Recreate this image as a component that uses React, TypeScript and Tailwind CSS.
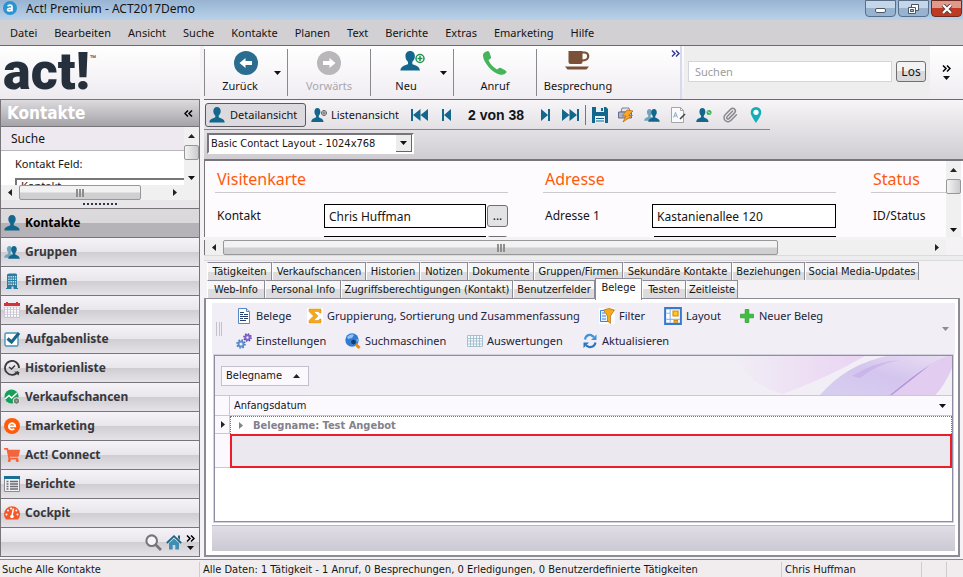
import type { ReactNode } from 'react'
import { Paperclip } from 'lucide-react'
import { FaShoppingCart } from 'react-icons/fa'

const TEAL = '#13678c'

const BUST =
  'M8 0C5.6 0 4.3 1.8 4.3 4.1c0 1.9.9 3.6 2 4.5v1.7c-1 1.1-5.7 1-6 5.2h15.4c-.3-4.2-5-4.1-6-5.2V8.6c1.1-.9 2-2.6 2-4.5C11.7 1.8 10.4 0 8 0z'

function Svg({ size = 16, children }: { size?: number; children: ReactNode }) {
  return (
    <svg width={size} height={size} viewBox="0 0 16 16" className="shrink-0" aria-hidden="true">
      {children}
    </svg>
  )
}

const Bust = () => (
  <Svg>
    <path d={BUST} fill={TEAL} />
  </Svg>
)

const Group = () => (
  <Svg>
    <path d={BUST} fill="#6fa5bf" transform="translate(0 2) scale(.68 .75)" />
    <path d={BUST} fill={TEAL} transform="translate(4 2) scale(.75 .82)" />
  </Svg>
)

const Building = () => (
  <Svg>
    <path d="M3 1.5 5 .5h7l1 1V15h1v1H9.5v-2.5h-2V16H2v-1h1z" fill="#2b7ba0" />
    <g fill="#d5e6ee">
      {[3, 5.5, 8, 10.5].map((y) =>
        [4.3, 6.5, 8.7, 10.9].map((x) => <rect key={`${x}-${y}`} x={x} y={y} width="1.3" height="1.5" />)
      )}
    </g>
  </Svg>
)

const CalendarIcon = () => (
  <Svg>
    <path d="M0 5h16v11H0z" fill="#cbc6d3" />
    <path d="M0 1h2V0h2v1h8V0h2v1h2v3H0z" fill="#d0343c" />
    <g fill="#fff">
      {[5.5, 8, 10.5, 13].map((y) =>
        [1, 4, 7, 10, 13].map((x) => <rect key={`${x}-${y}`} x={x} y={y} width="2" height="1.7" />)
      )}
    </g>
  </Svg>
)

const Check = () => (
  <Svg>
    <rect x="1" y="2" width="13" height="13" rx="1.5" fill="#fff" stroke="#4a93b4" strokeWidth="1.4" />
    <path d="m3.5 7.5 4 3.5L15 2" fill="none" stroke="#1b6588" strokeWidth="3" />
  </Svg>
)

const History = () => (
  <Svg>
    <path d="M14 11.5A7 7 0 1 1 15 8" fill="none" stroke="#3a3a3a" strokeWidth="1.8" />
    <path d="m10 11.5 5.5.5-1 3.500z" fill="#3a3a3a" />
    <path d="m5 7 2.5 2L11 5.5" fill="none" stroke="#3a3a3a" strokeWidth="1.5" />
  </Svg>
)

const Chances = () => (
  <Svg>
    <circle cx="7.5" cy="7.5" r="7" fill="#17a05a" />
    <path d="M1 10 5 6.5 7.5 9 13 4" fill="none" stroke="#fff" strokeWidth="1.5" />
    <circle cx="12.5" cy="12" r="3.3" fill="#777" stroke="#eee" />
    <circle cx="12.5" cy="12" r="1" fill="#aaa" />
  </Svg>
)

const Emark = () => (
  <Svg>
    <circle cx="8" cy="8" r="8" fill="#ff5a0a" />
    <path d="M4.5 8.300h6.700A3.2 3.2 0 1 0 10.3 10.7" fill="none" stroke="#fff" strokeWidth="1.8" />
  </Svg>
)

const Report = () => (
  <Svg>
    <path d="M.5.5h15v15H.5z" fill="#f2f2f4" stroke="#8b8b96" />
    <path d="M0 0h16v3H0z" fill="#1b6f96" />
    <path d="M2.5 5.5h2m-2 2.500h2m-2 2.500h2m-2 2.500h2M6 5.5h8M6 8h8m-8 2.500h8M6 13h8" stroke="#6b6b78" strokeWidth="1.3" />
  </Svg>
)

const Cockpit = () => (
  <Svg>
    <path d="M2 14.5A8 8 0 1 1 14 14.5z" fill="#f4572a" />
    <path d="m9.5 3.5-1.5 7" stroke="#fff" strokeWidth="1.5" />
    <circle cx="8" cy="11.5" r="1.8" fill="#fff" />
    {[[2.5, 9.5], [4, 5.5], [7, 3.5], [12.3, 5.5], [13.5, 9.5]].map(([x, y]) => (
      <circle key={x} cx={x} cy={y} r="1" fill="#fff" />
    ))}
  </Svg>
)

const Magnifier = () => (
  <Svg size={17}>
    <circle cx="6.3" cy="6.3" r="5" fill="#f5f4f6" stroke="#76747a" strokeWidth="1.9" />
    <path d="m10 10 5 5" stroke="#76747a" strokeWidth="2.6" />
  </Svg>
)

const Home = () => (
  <Svg>
    <path d="M3 9v6.500h3.700V11h2.600v4.500H13V9L8 4.5z" fill="#3f8fb2" />
    <path d="M.8 9 8 2.2 15.2 9" fill="none" stroke="#1b6588" strokeWidth="1.8" />
    <path d="M12 1.500h2V6l-2-2z" fill="#1b6588" />
  </Svg>
)

const Circle = ({ left, color }: { left?: boolean; color: string }) => (
  <svg width="24" height="24" viewBox="0 0 24 24" aria-hidden="true">
    <circle cx="12" cy="12" r="12" fill={color} />
    <path
      d="M5.5 12 11.5 7v3H18v4h-6.500v3z"
      fill="#fff"
      transform={left ? undefined : 'matrix(-1 0 0 1 24 0)'}
    />
  </svg>
)

const NewContact = () => (
  <svg width="25" height="20" viewBox="0 0 25 20" aria-hidden="true">
    <path d={BUST} fill={TEAL} transform="scale(1.27 1.25)" />
    <circle cx="20" cy="7.5" r="4" fill="#fff" stroke="#239150" strokeWidth="1.5" />
    <path d="M20 5v5m-2.5-2.5h5" stroke="#239150" strokeWidth="1.5" />
  </svg>
)

const Phone = () => (
  <svg width="24" height="24" viewBox="0 0 24 24" aria-hidden="true">
    <path
      d="M0 3.500Q1 .5 5 0q1 0 1.500 1.500L8 6q.3 1.200-.7 1.700L5.500 9q2 5.500 8.500 9.500l2-1.500q1-.7 2 0l4.500 2.500q1.500 1 .7 2.200Q21 24.500 16.500 23.500 11 22 6 16.500-.5 9 0 3.500z"
      fill="#45b55a"
    />
  </svg>
)

const Cup = () => (
  <svg width="26" height="19" viewBox="0 0 26 19" aria-hidden="true">
    <path d="M3.500 0h14v11q0 2-2 2h-10q-2 0-2-2z" fill="#7a5138" />
    <path d="M17 1.500h3q4 1 3 5-1 3-6 3" fill="none" stroke="#7a5138" strokeWidth="2.2" />
    <path d="M0 15.500h24l-2.500 3h-19z" fill="#7a5138" />
  </svg>
)

const Down = ({ color = '#111' }: { color?: string }) => (
  <svg width="7" height="4" viewBox="0 0 7 4" className="shrink-0" aria-hidden="true">
    <path d="M0 0h7L3.5 4z" fill={color} />
  </svg>
)
const Up = () => (
  <svg width="7" height="4" viewBox="0 0 7 4" className="shrink-0" aria-hidden="true">
    <path d="M0 4h7L3.5 0z" fill="#222" />
  </svg>
)
const Right = ({ color = '#222' }: { color?: string }) => (
  <svg width="4" height="7" viewBox="0 0 4 7" className="shrink-0" aria-hidden="true">
    <path d="M0 0v7l4-3.5z" fill={color} />
  </svg>
)
const Left = () => (
  <svg width="4" height="7" viewBox="0 0 4 7" className="shrink-0" aria-hidden="true">
    <path d="M4 0v7L0 3.5z" fill="#222" />
  </svg>
)

const Chevrons = ({ flip, color = '#000' }: { flip?: boolean; color?: string }) => (
  <svg width="9" height="7" viewBox="0 0 9 7" className={flip ? 'rotate-180' : ''} aria-hidden="true">
    <path d="m1 .5 3 3-3 3m4-6 3 3-3 3" fill="none" stroke={color} strokeWidth="1.5" />
  </svg>
)

const More = () => (
  <button aria-label="Mehr" className="flex flex-col items-center gap-1">
    <Chevrons />
    <Down />
  </button>
)

function HScroll({ thumb }: { thumb: string }) {
  return (
    <div className="flex h-[15px] items-center bg-[#f0f0f0]">
      <span className="flex w-[18px] justify-center">
        <Left />
      </span>
      <div className="flex h-full flex-1">
        <div
          className={`flex items-center justify-center gap-px rounded-xs border border-[#979797] bg-linear-to-b from-[#f2f2f2] from-45% to-[#cfcfd2] to-55% ${thumb}`}
        >
          <i className="h-2 w-0.5 bg-[#8e8e8e]" />
          <i className="h-2 w-0.5 bg-[#8e8e8e]" />
          <i className="h-2 w-0.5 bg-[#8e8e8e]" />
        </div>
      </div>
      <span className="flex w-[18px] justify-center">
        <Right />
      </span>
    </div>
  )
}

function VScroll() {
  return (
    <div className="flex w-[15px] shrink-0 flex-col items-center bg-[#f0f0f0]">
      <span className="flex h-[18px] items-center">
        <Up />
      </span>
      <div className="h-[15px] w-full rounded-xs border border-[#979797] bg-linear-to-r from-[#f4f4f4] to-[#cbcbd0]" />
      <span className="mt-auto flex h-[15px] items-center">
        <Down />
      </span>
    </div>
  )
}

const menu = ['Datei', 'Bearbeiten', 'Ansicht', 'Suche', 'Kontakte', 'Planen', 'Text', 'Berichte', 'Extras', 'Emarketing', 'Hilfe']

function TitleBar() {
  return (
    <header>
      <div className="flex h-5 items-start bg-linear-to-b from-[#98b4d2] to-[#b9d2ea] pl-[3px]">
        <svg width="14" height="14" viewBox="0 0 14 14" className="mt-px" aria-hidden="true">
          <circle cx="7" cy="7" r="7" fill="#2b93cd" />
          <path d="M4.5 5Q9 3 9 6v4.500M9 7Q4.5 7 4.5 8.700 5 11 9 8.800" fill="none" stroke="#fff" strokeWidth="1.7" />
        </svg>
        <h1 className="ml-[9px] flex-1 text-[12px] leading-[18px]">Act! Premium - ACT2017Demo</h1>
        <div className="flex gap-0.5 pr-px">
          <button aria-label="Minimieren" className="flex h-[17px] w-[31px] items-center justify-center rounded-b-sm border border-[#5a6f87] bg-linear-to-b from-[#c5d6e8] from-50% to-[#98b3cf] to-50%">
            <i className="mt-1 h-[5px] w-[11px] rounded-xs border border-[#4c5766] bg-white" />
          </button>
          <button aria-label="Verkleinern" className="flex h-[17px] w-[31px] items-center justify-center rounded-b-sm border border-[#5a6f87] bg-linear-to-b from-[#c5d6e8] from-50% to-[#98b3cf] to-50%">
            <svg width="13" height="12" viewBox="0 0 13 12" aria-hidden="true">
              <path d="M4.500 1.500h7v6h-7z" fill="#fff" stroke="#4c5766" />
              <path d="M1.500 4.500h7v6h-7z" fill="#fff" stroke="#4c5766" />
              <path d="M3.500 6.500h3v2h-3z" fill="#9fb7d0" stroke="#4c5766" />
            </svg>
          </button>
          <button aria-label="Schließen" className="flex h-[17px] w-[31px] items-center justify-center rounded-b-sm border border-[#6b2a22] bg-linear-to-b from-[#e09a8c] from-50% to-[#bf3a22] to-50%">
            <svg width="12" height="10" viewBox="0 0 12 10" aria-hidden="true">
              <path d="m2 1 8 8m0-8L2 9" stroke="#5a3a3f" strokeWidth="4" />
              <path d="m2 1 8 8m0-8L2 9" stroke="#fff" strokeWidth="2.2" />
            </svg>
          </button>
        </div>
      </div>
      <nav className="flex h-[26px] items-center gap-[17px] border-b border-[#6b6b6b] bg-[#d2d0d2] pl-2.5">
        {menu.map((m) => (
          <button key={m}>{m}</button>
        ))}
      </nav>
    </header>
  )
}

const areas = [
  { label: 'Kontakte', icon: <Bust /> },
  { label: 'Gruppen', icon: <Group /> },
  { label: 'Firmen', icon: <Building /> },
  { label: 'Kalender', icon: <CalendarIcon /> },
  { label: 'Aufgabenliste', icon: <Check /> },
  { label: 'Historienliste', icon: <History /> },
  { label: 'Verkaufschancen', icon: <Chances /> },
  { label: 'Emarketing', icon: <Emark /> },
  { label: 'Act! Connect', icon: <FaShoppingCart size={16} color="#f4633a" /> },
  { label: 'Berichte', icon: <Report /> },
  { label: 'Cockpit', icon: <Cockpit /> },
]

function Sidebar() {
  return (
    <aside className="flex w-[200px] shrink-0 flex-col">
      <div className="flex h-[53px] items-start bg-linear-to-b from-white to-[#eeebf0] pl-[3px] text-[#25303c]">
        <span className="font-[Roboto] text-[52px] leading-[52px] font-black">act!</span>
        <span className="mt-2 text-[8px] leading-[8px] font-bold">™</span>
      </div>
      <div className="flex min-h-0 flex-1 flex-col border-x border-[#77757a]">
        <div className="flex h-7 items-center justify-between border-y border-[#77757a] bg-linear-to-b from-[#dddbde] to-[#a5a3a8] pr-1.5 pl-1.5">
          <h2 className="font-['DejaVu_Sans_Condensed'] text-[17px] font-bold text-white">Kontakte</h2>
          <button aria-label="Einklappen">
            <Chevrons flip />
          </button>
        </div>
        <div className="flex h-[58px]">
          <div className="flex-1 overflow-hidden bg-white">
            <div className="h-6 border-b border-[#b9b7bc] bg-[#eee9f0] pl-2.5 text-[12px] leading-[23px]">Suche</div>
            <label htmlFor="feld" className="block pt-1 pl-3.5 leading-[17px]">
              Kontakt Feld:
            </label>
            <select id="feld" className="mt-1.5 ml-3.5 block w-[200px] appearance-none border-2 border-[#777] pl-1 leading-3">
              <option>Kontakt</option>
            </select>
          </div>
          <VScroll />
        </div>
        <div className="bg-[#f0f0f0] pr-[15px]">
          <HScroll thumb="w-[122px]" />
        </div>
        <div className="flex h-2 items-center justify-center gap-0.5 bg-[#e9e6ea]">
          {Array.from({ length: 9 }, (_, i) => (
            <i key={i} className="size-0.5 bg-[#2c3550]" />
          ))}
        </div>
        <nav className="text-[12px] font-bold text-[#37373c]">
          {areas.map(({ label, icon }, i) => (
            <button
              key={label}
              className={
                i === 0
                  ? 'flex h-[29px] w-full items-center gap-[5px] border-t border-[#77757a] bg-linear-to-b from-[#dbd9dc] from-50% to-[#b5b3b8] to-50% pl-[3px] text-black'
                  : 'flex h-[29px] w-full items-center gap-[5px] border-t border-[#77757a] bg-[linear-gradient(#f6f3f8,#e9e6eb_50%,#cfcdd1_50%,#e6e3e8)] pl-[3px]'
              }
            >
              {icon}
              {label}
            </button>
          ))}
        </nav>
        <div className="flex flex-1 items-center justify-end gap-1 border-y border-[#77757a] bg-[linear-gradient(#f6f3f8,#e9e6eb_50%,#cfcdd1_50%,#e6e3e8)] pr-1">
          <button aria-label="Suchen">
            <Magnifier />
          </button>
          <button aria-label="Start">
            <Home />
          </button>
          <More />
        </div>
      </div>
    </aside>
  )
}

function Tool({ icon, label, arrow, off }: { icon: ReactNode; label: string; arrow?: boolean; off?: boolean }) {
  return (
    <div className="relative my-[3px] w-[83px] border-l border-[#8b898e]">
      <button disabled={off} className={off ? 'flex w-full flex-col items-center text-[#a9a7ac]' : 'flex w-full flex-col items-center'}>
        <span className="flex h-[30px] items-start pt-0.5">{icon}</span>
        <span className={arrow ? 'pr-3 leading-[14px]' : 'leading-[14px]'}>{label}</span>
      </button>
      {arrow && (
        <span className="absolute top-[22px] right-1.5">
          <Down />
        </span>
      )}
    </div>
  )
}

function Toolbar() {
  return (
    <div className="flex h-[53px] bg-linear-to-b from-white to-[#f0edf2]">
      <Tool icon={<Circle left color="#2a6d90" />} label="Zurück" arrow />
      <Tool icon={<Circle color="#b9b7ba" />} label="Vorwärts" off />
      <Tool icon={<NewContact />} label="Neu" arrow />
      <Tool icon={<Phone />} label="Anruf" />
      <Tool icon={<Cup />} label="Besprechung" />
      <div className="flex flex-1 items-start justify-end border-r-2 border-[#d5daf0] pt-1">
        <Chevrons color="#3b3b99" />
      </div>
      <form className="ml-0.5 flex h-[51px] items-center gap-1 bg-[#efeeef] px-1" onSubmit={(e) => e.preventDefault()}>
        <input
          aria-label="Suchen"
          placeholder="Suchen"
          className="h-[21px] w-[204px] border border-[#cfd6e2] bg-white px-1.5 placeholder:text-[#9c9c9c]"
        />
        <button className="h-[21px] w-[30px] rounded-[3px] border border-[#707070] bg-linear-to-b from-[#f3f3f3] from-50% to-[#d9d9dc] to-50% text-[12px] leading-4">
          Los
        </button>
      </form>
      <div className="flex w-[33px] justify-center self-center pr-px">
        <More />
      </div>
    </div>
  )
}

const Step = ({ back, end }: { back?: boolean; end?: boolean }) => (
  <button aria-label={back ? 'Zurück blättern' : 'Weiter blättern'}>
    <svg width={end ? 17 : 9} height="12" viewBox={end ? '0 0 17 12' : '0 0 9 12'} className={back ? 'rotate-180' : ''} aria-hidden="true">
      <path d={end ? 'M0 0v12l7.5-6zM7.5 0v12l7.5-6zM15 0h2v12h-2z' : 'M0 0v12l7-6zM7 0h2v12H7z'} fill={TEAL} />
    </svg>
  </button>
)

function ViewBar() {
  return (
    <div className="flex h-[30px] w-[566px] items-center border-b border-[#87858a] pl-px">
      <button className="flex h-6 w-[101px] items-center gap-[5px] rounded-[3px] border border-[#5c5a60] bg-[#dcdadf] pl-[3px]">
        <Bust />
        Detailansicht
      </button>
      <button className="ml-[5px] flex items-center gap-1">
        <Svg>
          <path d={BUST} fill={TEAL} transform="translate(0 1) scale(.8 .9)" />
          <circle cx="13" cy="6" r="2.5" fill="#fff" stroke="#666" />
          <path d="M13 3v6m-3-3h6" stroke="#666" />
        </Svg>
        Listenansicht
      </button>
      <div className="ml-3 flex flex-1 items-center">
        <Step back end />
        <span className="ml-3.5 flex">
          <Step back />
        </span>
        <span className="flex-1 text-center text-[14px] leading-5 font-bold font-['Liberation_Sans']">2 von 38</span>
        <span className="mr-3 flex">
          <Step />
        </span>
        <Step end />
      </div>
      <div className="ml-1.5 flex items-center gap-2.5 border-l border-[#77757a] py-0.5 pr-1.5 pl-1.5">
        <button aria-label="Speichern">
          <Svg>
            <path d="M0 0h14l2 2v14H0z" fill={TEAL} />
            <path d="M4 0h8v5H4zM3 9h10v7H3z" fill="#e9eef2" />
            <path d="M9 1h2v3H9zM4 11h8v1H4zm0 2.500h8v1H4z" fill={TEAL} />
          </Svg>
        </button>
        <button aria-label="Drucken">
          <Svg>
            <path d="M4 1h7l1 4H3z" fill="#dfe6f5" stroke="#667" strokeWidth=".8" />
            <path d="M.5 5h13v6H.5z" fill="#a9b4cf" stroke="#4c5577" strokeWidth=".8" />
            <path d="m9 3-5 6h4l-3 6 9.500-6.500H10.500L15 4z" fill="#f9a825" stroke="#c56a0c" strokeWidth=".8" />
          </Svg>
        </button>
        <button aria-label="Gruppe">
          <Group />
        </button>
        <button aria-label="Brief">
          <Svg>
            <path d="M1.500.5h9l3 3v12h-12z" fill="#fafafa" stroke="#a5a5aa" />
            <path d="M10.500.5v3h3" fill="none" stroke="#a5a5aa" />
            <path d="m3.500 10.500 2-5 2 5m-3.300-1.500h2.600" fill="none" stroke="#7ba3c6" strokeWidth=".9" />
            <path d="m10 12 5-5" stroke="#444" strokeWidth="1.6" />
          </Svg>
        </button>
        <button aria-label="Kontakt anrufen">
          <Svg>
            <path d={BUST} fill={TEAL} transform="translate(0 1) scale(.8 .9)" />
            <circle cx="13" cy="5.5" r="2.5" fill="#3cae52" />
            <path d="m12 4.500 2 2" stroke="#fff" />
          </Svg>
        </button>
        <button aria-label="Anhang">
          <Paperclip size={16} color="#8a888d" strokeWidth={2.2} />
        </button>
        <button aria-label="Karte">
          <Svg>
            <path d="M8 0a5.300 5.300 0 0 0-5.300 5.500C2.700 9 8 16 8 16s5.300-7 5.300-10.500A5.300 5.300 0 0 0 8 0z" fill="#16adb8" />
            <circle cx="8" cy="5.3" r="2.6" fill="#fff" />
          </Svg>
        </button>
      </div>
    </div>
  )
}

type SectionProps = { title: string; label: string; value?: string; labelWidth?: string; width?: string; lookup?: boolean }

function Section({ title, label, value, labelWidth, width, lookup }: SectionProps) {
  return (
    <section className="w-[293px] shrink-0">
      <h3 className="h-[32px] border-b border-[#cdcacf] pl-0.5 text-[16px] leading-[36px] text-[#ff5a0a]">{title}</h3>
      <div className="mt-[11px] flex h-6 items-center pl-0.5 text-[12px]">
        <label htmlFor={label} className={labelWidth}>
          {label}
        </label>
        {value && <input id={label} defaultValue={value} className={`h-6 border border-black bg-white px-1 ${width}`} />}
        {lookup && (
          <button className="ml-px h-[22px] w-[21px] rounded-[3px] border border-[#707070] bg-[#e3e3e6] leading-[14px]">...</button>
        )}
      </div>
      {value && (
        <div className="mt-2 flex pl-0.5">
          <span className={labelWidth} />
          <input aria-label={`${label} Zusatz`} className={`h-6 border border-black bg-white ${width}`} />
          {lookup && <span className="ml-px h-[22px] w-[21px] rounded-[3px] border border-[#707070]" />}
        </div>
      )}
    </section>
  )
}

const tabRows = [
  [
    ['Tätigkeiten', 'w-[65px]'],
    ['Verkaufschancen', 'w-[94px]'],
    ['Historien', 'w-[54px]'],
    ['Notizen', 'w-[48px]'],
    ['Dokumente', 'w-[66px]'],
    ['Gruppen/Firmen', 'w-[89px]'],
    ['Sekundäre Kontakte', 'w-[109px]'],
    ['Beziehungen', 'w-[73px]'],
    ['Social Media-Updates', 'w-[114px]'],
  ],
  [
    ['Web-Info', 'w-[58px]'],
    ['Personal Info', 'w-[76px]'],
    ['Zugriffsberechtigungen (Kontakt)', 'w-[172px]'],
    ['Benutzerfelder', 'w-[82px]'],
    ['Belege', 'w-[47px]'],
    ['Testen', 'w-[44px]'],
    ['Zeitleiste', 'w-[52px]'],
  ],
]

function Tabs() {
  return (
    <div className="pl-[3px] font-['DejaVu_Sans_Condensed'] text-[11px]">
      {tabRows.map((row) => (
        <div key={row[0][0]} className="flex h-[18px]">
          {row.map(([t, w]) => (
            <button
              key={t}
              className={
                t === 'Belege'
                  ? `z-10 -mt-0.5 h-[22px] border border-b-0 border-[#8d8b96] bg-white pb-1 leading-4 whitespace-nowrap ${w}`
                  : `border border-b-0 border-[#8d8b96] border-l-white bg-linear-to-b from-[#f6f6f6] from-50% to-[#dcdcde] to-50% leading-4 whitespace-nowrap ${w}`
              }
            >
              {t}
            </button>
          ))}
        </div>
      ))}
    </div>
  )
}

const Sheet = () => (
  <Svg>
    <path d="M2.500.5h8l3 3v12h-11z" fill="#fff" stroke="#5589c4" />
    <path d="M10.500.5v3h3" fill="#cfe2f6" stroke="#5589c4" />
    <path d="M4 4.500h4m-4 2h3m1 0h4m-8 2h8m-8 2h3m1 0h4m-8 2h6" stroke="#27406b" />
  </Svg>
)
const Sigma = () => (
  <Svg>
    <path d="M0 0h16v16H0z" fill="#fff" />
    <path d="M2 1h12v4h-1.500l-.5-1.500H6.500L11 8l-4.500 4.500H12l.5-1.500H14v4H2v-2.500L6.500 8 2 3.500z" fill="#f6a81b" stroke="#d98b0c" strokeWidth=".5" />
  </Svg>
)
const Filter = () => (
  <Svg>
    <path d="M0 0h16v16H0z" fill="#fff" />
    <path d="M1.500 2.500h9v11h-9z" fill="#eaf3fd" stroke="#3c82d8" />
    <path d="M3 5h3M3 8h4m-4 3h4" stroke="#3c82d8" />
    <path d="M4.500 2 8.500 8v5l3 2.500V8L15.500 2Q10-1 4.500 2z" fill="#f5a91c" stroke="#b56c0a" strokeWidth=".7" />
  </Svg>
)
const LayoutIcon = () => (
  <Svg size={18}>
    <path d="M1 1h14v14H1z" fill="#fff" stroke="#3a78cf" strokeWidth="1.8" />
    <path d="M5.500 2v12M2 5.500h3.500M2 11h12" stroke="#8fb9ee" />
    <path d="M8 3.500h4.500v4.500H8zM9 12h3v1.500H9z" fill="#ffc629" stroke="#d08b06" />
  </Svg>
)
const Plus = () => (
  <Svg>
    <path d="M6.200 1.500h3.600v4.700h4.700v3.600H9.800v4.700H6.200V9.800H1.500V6.200h4.700z" fill="#3fbf3f" stroke="#2a9a2c" strokeWidth=".7" />
  </Svg>
)
const Gears = () => (
  <Svg>
    <circle cx="5" cy="11" r="2.5" fill="none" stroke="#5d8fd0" strokeWidth="2" />
    <circle cx="5" cy="11" r="4" fill="none" stroke="#4779bd" strokeWidth="1.5" strokeDasharray="1.57 1.57" />
    <circle cx="11.5" cy="4.5" r="2.2" fill="none" stroke="#7c63c9" strokeWidth="2" />
    <circle cx="11.5" cy="4.5" r="3.6" fill="none" stroke="#6145b5" strokeWidth="1.5" strokeDasharray="1.41 1.41" />
  </Svg>
)
const Globe = () => (
  <Svg>
    <circle cx="7" cy="7" r="6.7" fill="#2f7bd6" />
    <path d="M2 4Q6 0 9 2L7 5 3 6zM9 8l4-2-1 4z" fill="#8fc4f5" />
    <path d="m10.500 11 4 4" stroke="#e88a1d" strokeWidth="2.8" />
    <circle cx="8.5" cy="9" r="3" fill="#123c80" stroke="#4b88cc" />
  </Svg>
)
const Grid = () => (
  <Svg>
    <path d="M.5 2.500h15v11H.5zM0 5.500h16M0 8h16m-16 3h16M3.500 2v12m3-12v12m3-12v12m3-12v12" fill="#f7fbff" stroke="#9fbccd" strokeWidth=".9" />
  </Svg>
)
const Refresh = () => (
  <Svg>
    <path d="M3 6.500Q4 1.500 9 2l3 2" fill="none" stroke="#3f93d8" strokeWidth="2.2" />
    <path d="M14.500 1.500V7H9z" fill="#3f93d8" />
    <path d="M13.500 9.500q-1 5-6.500 4.500l-3-1.500" fill="none" stroke="#2a78c2" strokeWidth="2.2" />
    <path d="M1.500 15V9.500H7z" fill="#2a78c2" />
  </Svg>
)

const actions = [
  [
    { label: 'Belege', icon: <Sheet />, w: 'w-[71px]' },
    { label: 'Gruppierung, Sortierung und Zusammenfassung', icon: <Sigma />, w: 'w-[292px]' },
    { label: 'Filter', icon: <Filter />, w: 'w-[65px]' },
    { label: 'Layout', icon: <LayoutIcon />, w: 'w-[75px]' },
    { label: 'Neuer Beleg', icon: <Plus />, w: 'w-[100px]' },
  ],
  [
    { label: 'Einstellungen', icon: <Gears />, w: 'w-[109px]' },
    { label: 'Suchmaschinen', icon: <Globe />, w: 'w-[122px]' },
    { label: 'Auswertungen', icon: <Grid />, w: 'w-[115px]' },
    { label: 'Aktualisieren', icon: <Refresh />, w: 'w-[100px]' },
  ],
]

function ActionBar() {
  return (
    <div className="flex h-[51px] items-center bg-[#f1eef6] text-[#22243a]">
      <div className="ml-1 flex h-3.5 w-1.5 justify-between border-x border-[#c5c2cc]">
        <i className="mx-auto w-px bg-[#c5c2cc]" />
      </div>
      <div className="ml-3.5 flex-1">
        {actions.map((row, i) => (
          <div key={i} className="flex h-[25px] items-center">
            {row.map(({ label, icon, w }) => (
              <button key={label} className={`flex items-center gap-1 whitespace-nowrap ${w}`}>
                {icon}
                {label}
              </button>
            ))}
          </div>
        ))}
      </div>
      <span className="mr-1.5">
        <Down color="#8c8a96" />
      </span>
    </div>
  )
}

function Receipts() {
  return (
    <div className="flex flex-1 flex-col border border-[#8f8ca3] bg-white outline outline-[#d4d1de]">
      <div className="relative flex h-[39px] items-center bg-[#f1eef6] pl-1.5">
        <svg viewBox="0 0 220 39" preserveAspectRatio="none" className="absolute top-0 right-0 h-full w-[220px]" aria-hidden="true">
          <defs>
            <linearGradient id="wash">
              <stop offset="0" stopColor="#f1eef6" />
              <stop offset="1" stopColor="#ead3f2" />
            </linearGradient>
            <linearGradient id="petal" x1="0" y1="1" x2="1" y2="0">
              <stop offset="0" stopColor="#d8cff0" />
              <stop offset=".5" stopColor="#d3c5ee" />
              <stop offset="1" stopColor="#eadff3" />
            </linearGradient>
          </defs>
          <path d="M0 0h133Q95 22 50 38 20 30 0 0z" fill="url(#wash)" />
          <path d="M88 39Q115 8 155 0h65v12q-8 18-17 27z" fill="url(#petal)" />
          <path d="M120 20Q145 5 168 4 145 8 128 22z" fill="#bfa6e8" opacity=".5" />
          <path d="M158 39Q185 12 215 0h5v12q-8 18-17 27z" fill="#e2cdf1" />
          <path d="M158 39Q180 20 198 9 182 22 160 39z" fill="#b697df" />
        </svg>
        <button className="relative flex h-5 w-[88px] items-center justify-between border border-[#c3c0cf] bg-[#fbf9fe] pr-2 pl-1 font-['DejaVu_Sans_Condensed'] text-[11px]">
          Belegname
          <Up />
        </button>
      </div>
      <table className="w-full border-separate border-spacing-0 text-left font-['DejaVu_Sans_Condensed'] text-[11px]">
        <thead>
          <tr className="h-[21px]">
            <th aria-label="Auswahl" className="w-[15px] border-y border-r border-[#cbc8d6] bg-[#fbf9fe] p-0" />
            <th className="border-y border-[#cbc8d6] bg-[#fbf9fe] p-0 pr-1.5 pl-1 font-normal">
              <span className="flex items-center justify-between">
                Anfangsdatum
                <Down />
              </span>
            </th>
          </tr>
        </thead>
        <tbody>
          <tr className="h-[18px]">
            <td className="border-r border-b border-[#cbc8d6] bg-[#fbf9fe] p-0 pl-1.5">
              <Right />
            </td>
            <td className="border border-b-0 border-dotted border-[#777486] p-0">
              <button className="flex items-center gap-2.5 pl-2 leading-4 font-bold text-[#83818c]">
                <Right color="#83818c" />
                Belegname: Test Angebot
              </button>
            </td>
          </tr>
          <tr className="h-[34px]">
            <td className="border-b border-[#cbc8d6] bg-[#fbf9fe] p-0" />
            <td className="border-2 border-[#ed1c29] bg-[#ebe8f0] p-0" />
          </tr>
        </tbody>
      </table>
    </div>
  )
}

export default function App() {
  return (
    <div className="flex h-screen flex-col bg-[#f5f2f6] font-['Noto_Sans',sans-serif] text-[11px] leading-4 text-[#151515]">
      <TitleBar />
      <div className="flex min-h-0 flex-1">
        <Sidebar />
        <div className="flex min-w-0 flex-1 flex-col pl-1">
          <Toolbar />
          <div className="flex h-[62px] flex-col border-t border-b-2 border-t-[#6b6b6b] border-b-[#77757a] bg-linear-to-b from-[#f8f5f9] to-[#cfcdd1]">
            <ViewBar />
            <div className="relative mt-[3px] ml-[3px] flex w-[207px]">
              <select
                aria-label="Layout"
                className="h-[21px] w-full appearance-none border-2 border-[#77757a] border-r-white border-b-white bg-white pl-0.5 font-['DejaVu_Sans_Condensed'] text-[11px]"
              >
                <option>Basic Contact Layout - 1024x768</option>
              </select>
              <span className="pointer-events-none absolute inset-y-0.5 right-0.5 flex w-4 items-center justify-center border-r border-b border-[#666] bg-[#ececec]">
                <Down />
              </span>
            </div>
          </div>
          <div className="flex h-[76px] border-l border-[#77757a] bg-[#fdfbfe] pr-0.5">
            <div className="flex min-w-0 flex-1 gap-[35px] overflow-hidden pl-2.5">
              <Section title="Visitenkarte" label="Kontakt" value="Chris Huffman" labelWidth="w-[107px]" width="w-[162px]" lookup />
              <Section title="Adresse" label="Adresse 1" value="Kastanienallee 120" labelWidth="w-[110px]" width="w-[184px]" />
              <Section title="Status" label="ID/Status" />
            </div>
            <VScroll />
          </div>
          <div className="mt-[3px] border-l border-[#77757a] pr-[17px]">
            <HScroll thumb="w-[555px] max-w-[80%]" />
          </div>
          <div className="mb-px h-1.5 border-y border-[#dcdadf] bg-[#ededee]" />
          <Tabs />
          <main className="mr-[3px] flex min-h-0 flex-1 flex-col border-2 border-t border-[#8d8b96] bg-white pt-1 pr-[3px] pb-1 pl-1.5">
            <ActionBar />
            <div className="flex flex-1 flex-col px-0.5 py-px">
              <Receipts />
            </div>
            <div className="mt-0.5 h-[26px] border-t border-[#bab7c4] bg-linear-to-b from-[#e0dde6] to-[#cbc9d3]" />
          </main>
        </div>
      </div>
      <footer className="mt-0.5 flex h-[18px] items-center border-t border-[#8b898e] bg-[#f1edee] pt-0.5 font-['DejaVu_Sans_Condensed'] text-[11px] whitespace-nowrap">
        <span className="w-[200px] border-r border-[#cfcccf] pl-0.5">Suche Alle Kontakte</span>
        <span className="flex-1 border-r border-[#cfcccf] pl-[3px]">
          Alle Daten: 1 Tätigkeit - 1 Anruf, 0 Besprechungen, 0 Erledigungen, 0 Benutzerdefinierte Tätigkeiten
        </span>
        <span className="w-[140px] border-r border-[#cfcccf] pl-[3px]">Chris Huffman</span>
        <span className="h-4 w-[25px] border-r border-[#cfcccf]" />
        <span className="w-4" />
      </footer>
    </div>
  )
}
